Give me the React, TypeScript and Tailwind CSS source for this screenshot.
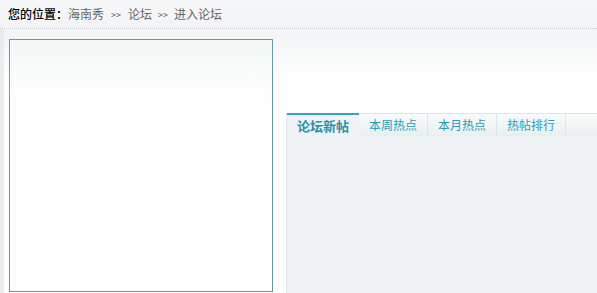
const tabs = ["论坛新帖", "本周热点", "本月热点", "热帖排行"]

function Breadcrumb() {
  return (
    <div className="flex h-[29px] items-center border-b border-dotted border-[#c9cdd0] bg-gradient-to-b from-[#f7f8f9] to-[#f1f3f4] pl-[8px] text-[12px] leading-none">
      <span className="w-[60px] font-medium text-black">您的位置：</span>
      <span className="text-[#666]">海南秀</span>
      <span className="mx-[7px] text-[9px] text-[#555]">&gt;&gt;</span>
      <span className="text-[#666]">论坛</span>
      <span className="mx-[6px] text-[9px] text-[#555]">&gt;&gt;</span>
      <span className="text-[#666]">进入论坛</span>
    </div>
  )
}

function ForumTabs() {
  return (
    <div className="flex h-full flex-col border-l border-[#e3eaee] bg-[#eff3f5]">
      <div className="flex h-[23px] bg-gradient-to-b from-[#f9fbfc] to-[#e9eff1] text-[12px] leading-none">
        {tabs.map((t, i) =>
          i === 0 ? (
            <div
              key={t}
              className="flex w-[72px] items-center border-t-2 border-[#3aa3b8] bg-[#eff3f5] pl-[10px] text-[13px] font-bold text-[#2494b2]"
            >
              {t}
            </div>
          ) : (
            <div
              key={t}
              className="flex w-[69px] items-center justify-center border-r border-t border-[#dde5e9] text-[#2b9cb8]"
            >
              {t}
            </div>
          )
        )}
        <div className="flex-1 border-t border-[#dde5e9]" />
      </div>
      <div className="flex-1" />
    </div>
  )
}

export default function App() {
  return (
    <div
      className="h-[293px] w-[597px] overflow-hidden bg-white"
      style={{ fontFamily: '"Noto Sans CJK SC", "Noto Sans", sans-serif' }}
    >
      <Breadcrumb />
      <div className="flex h-[264px] bg-gradient-to-b from-[#f1f3f5] via-white via-20% to-white">
        <div className="w-[4px] bg-[#e6ecef]" />
        <div className="ml-[5px] mt-[10px] h-[253px] w-[264px] border border-[#6497a8] bg-gradient-to-b from-[#f4f6f7] to-white to-[25%]" />
        <div className="ml-[13px] mt-[84px] flex-1">
          <ForumTabs />
        </div>
      </div>
    </div>
  )
}
